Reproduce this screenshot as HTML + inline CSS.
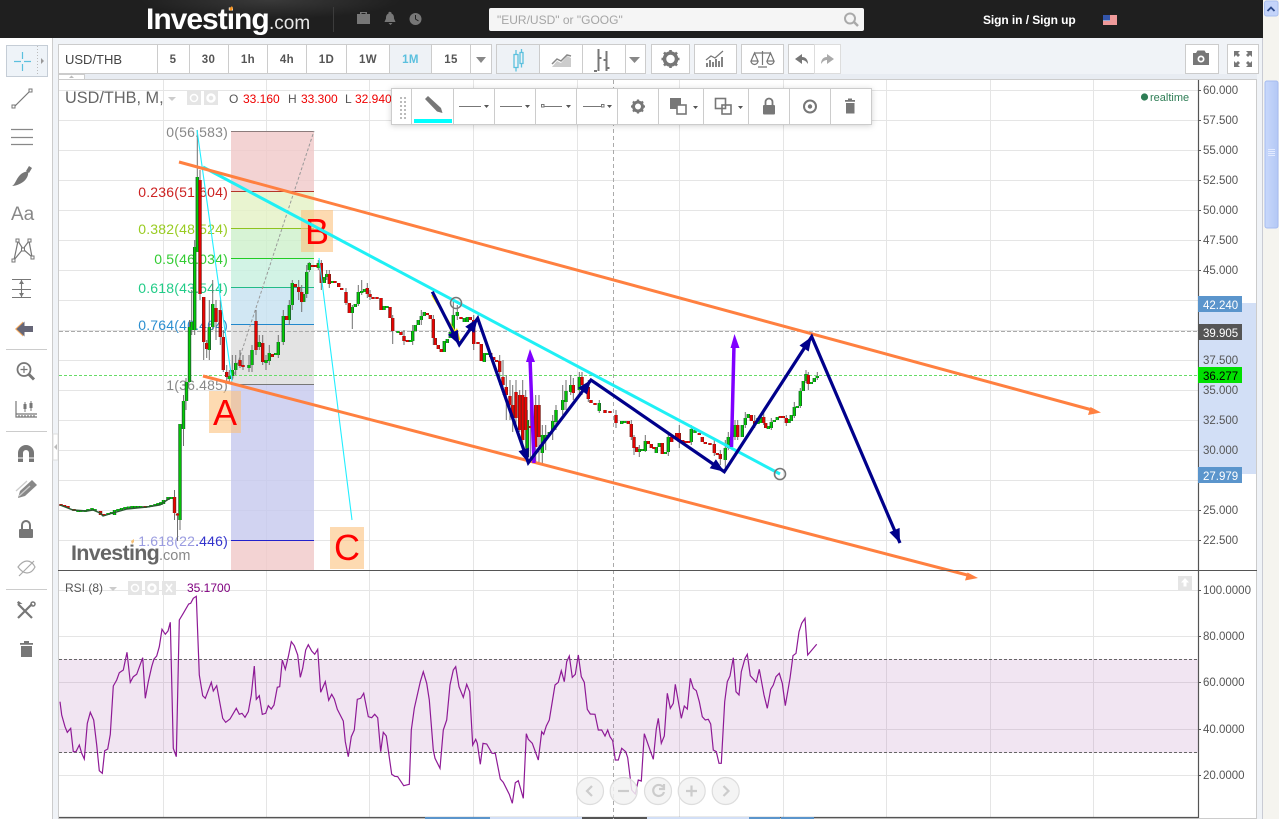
<!DOCTYPE html>
<html><head><meta charset="utf-8"><title>USD/THB</title>
<style>
html,body{margin:0;padding:0;background:#f0f3f7;overflow:hidden;width:1279px;height:819px}
svg{display:block;position:absolute;left:0;top:0}
text{font-family:"Liberation Sans",sans-serif}
.ax{font-size:11.5px;fill:#555}
.tb{font-size:11.5px;font-weight:bold;fill:#555;text-anchor:middle;letter-spacing:.4px}
.fib{font-size:14px;text-anchor:end;letter-spacing:.2px}
.ico{fill:#777}
.icl{fill:none;stroke:#777;stroke-width:1.2}
.btn{fill:#fff;stroke:#ccc}
</style></head><body>
<svg width="1279" height="819" viewBox="0 0 1279 819" xmlns="http://www.w3.org/2000/svg">
<defs>
<radialGradient id="hd" cx=".5" cy="0" r=".5"><stop offset="0" stop-color="#3a3a3a"/><stop offset="1" stop-color="#1f1f1f"/></radialGradient>
<linearGradient id="th" x1="0" x2="1" y1="0" y2="0"><stop offset="0" stop-color="#c8d8fb"/><stop offset="1" stop-color="#b4c8f5"/></linearGradient>
<path id="gb" d="M114.500 510V515M118 509V511M121.500 508V510M125 507V509M128.500 506.500V508.500M132 506V508M135 506V508M138 506V508M141 506V508M148 506V507.500M151 505V507M155 504V506M158 503V505M161 502V505M163.500 500V504M168 497V500M171.500 497V499M78 510V512M81 510V512M85 510V512M88 509V511M92 508V510M95 509V511M108 513V515M111.500 512V514M180 424V520M183.500 401V429M186.500 382V401M189.500 327V382M191.700 322V330M194.700 247V330M197.300 177V252M209.300 327V350M212.700 304V327M229.300 376V379M232.300 370V376M235.700 363V370M249 365V368M252 350V365M259.300 342V347M266 360V363M269.300 353V361M275.700 353V355M278.300 342V355M283.300 316V342M289.300 305V320M292.300 283V305M303.700 294V302M306.700 272V294M309.300 263V270M318.300 263V268M324.300 277V283M326.700 274V277M332.300 281V283M352.300 307V313M355.300 304V307M358.300 292V304M361.700 291V293M364.500 289V292M384 306V310M387 306V308M398 331V333M410.700 340V342M412.700 331V341M415.300 325V331M418.300 320V325M421.300 316V320M424.300 312V316M444.300 341V352M447.300 339V343M450.300 332V338M453.300 315V333M457.300 312V316M464.300 318V322M467.300 317V322M484.300 353V362M487.300 353V355M527.300 420V457M542.300 435V453M545.700 435V440M549.300 432V435M552.700 421V430M556 410V422M562.700 400V410M566 391V402M570.700 385V392M579.300 377V390M599.300 403V411M621.700 421V424M624.700 421V423M639.300 449V452M642.300 449V451M645.300 441V451M656.300 447V453M659.300 443V447M665.300 452V454M668.300 437V452M691.300 429V442M695 430V433M725.300 448V460M728.300 437V448M735 425V437M742.300 425V437M745.300 418V425M748.300 414V418M758 418V424M760.700 417V423M768.300 426V429M771.300 422V428M774.300 420V422M777.300 417V420M789 419V423M791.300 415V421M794.300 407V416M797.300 406V408M800.300 391V406M803.300 381V391M806 374V381M811.300 382V384M814.300 378V382M817.300 376V378"/>
<path id="rb" d="M61 504V506M64.500 505V507M68 506V508M74 509V511M100.500 511V515M104 514V516M145 506V508M174.500 497V513M177.500 513.500V515.500M200 180V294M203.700 297V342M206.700 343V349M216 308V322M220.300 310V337M223.300 337V370M226.700 372V377M240 360V366M243 365V367M256 321V350M262.700 343V362M272.300 354V357M286.700 316V320M295.300 284V287M298.700 287V292M301.700 292V302M312.300 265V267M315.700 265V267M321.300 263V283M329.300 274V284M335 281V283M338.700 283V287M341.700 288V290M346 292V303M349.300 303V313M367.300 288V294M370 294V297M373 297V299M377 297V299M381 298V310M390 307V318M392.700 318V331M401 332V335M404 336V341M407.300 340V342M427.300 313V315M430.300 315V319M433.300 319V338M435.300 338V345M438.300 345V349M441.300 349V352M461 317V319M470.300 317V320M473.700 320V344M478 342V344M481.300 344V361M490.700 353V357M493.700 357V360M496.700 360V362M499.700 361V372M503 377V385M506.300 387V395M510 396V405M512.700 405V418M516 392V418M519.700 395V430M522.700 395V440M525.700 397V430M530.300 426V428M535.700 405V447M539 405V437M573.300 385V393M582 377V385M588.300 387V399M591 400V403M595 403V405M605 410V413M610 411V413M616 415V423M628.300 421V424M631.300 424V437M634 437V448M636.700 447V452M648.300 441V444M651.300 444V448M654 447V449M662.300 443V454M671.700 437V442M676.700 433V438M679.300 433V442M682.700 440V443M685.700 441V443M688.700 441V443M699.300 433V435M702.300 437V442M705.300 442V444M710 443V445M714.300 444V453M717.300 453V455M720.300 454V459M737.700 425V437M751.300 415V421M754.700 421V425M763.700 417V423M765.700 423V428M780.300 416V418M783.300 416V418M786.300 418V423M808.300 375V384"/>
</defs>

<!-- page bg -->
<rect x="0" y="0" width="1279" height="819" fill="#f0f3f7"/>
<!-- header -->
<rect x="0" y="0" width="1263" height="38" fill="#1f1f1f"/>
<rect x="140" y="0" width="260" height="38" fill="url(#hd)"/>
<text x="146" y="29" font-size="30" font-weight="bold" fill="#fff" letter-spacing="-1">Investing</text>
<text x="269" y="29" font-size="19" fill="#e8e8e8">.com</text>
<path d="M229 9l3-3 1 3-2 2z" fill="#f7931e"/>
<rect x="333" y="7" width="1" height="25" fill="#3c3c3c"/>
<path d="M357 14h3v-2h7v2h3v10h-13zM361.500 14h4v-1h-4z" fill="#777" fill-rule="evenodd"/>
<path d="M390.500 12a1.300 1.300 0 0 1 1 1.500c2.500 1 2.500 3.500 2.500 5l1.500 3.500h-11l1.500-3.500c0-1.500 0-4 2.500-5a1.300 1.300 0 0 1 2-1.500zM388.500 23h4l-2 2z" fill="#777"/>
<circle cx="415.500" cy="19" r="6" fill="#777"/><path d="M415.500 15v4l3 2" stroke="#222" fill="none"/>
<rect x="489" y="8" width="375" height="23" rx="2" fill="#f5f5f5"/>
<text x="497" y="24" font-size="12" fill="#a5a5a5">"EUR/USD" or "GOOG"</text>
<circle cx="850" cy="18.500" r="5" fill="none" stroke="#aaa" stroke-width="2"/><path d="M854 22l4 4" stroke="#aaa" stroke-width="2.500"/>
<text x="983" y="24" font-size="12" font-weight="bold" fill="#fff" letter-spacing="-.08">Sign in / Sign up</text>
<rect x="1103" y="15" width="14" height="10" fill="#fff"/>
<path d="M1103 16h14M1103 18h14M1103 20h14M1103 22h14M1103 24h14" stroke="#d33" stroke-width="1"/>
<rect x="1103" y="15" width="7" height="5.500" fill="#35a"/>

<!-- scrollbar -->
<rect x="1263" y="0" width="16" height="819" fill="#f5f4ef"/>
<rect x="1264.500" y="1" width="13.500" height="15" rx="2" fill="#c4d4fa" stroke="#a9bff0"/>
<path d="M1267.500 11l3.500-3.500 3.500 3.500" fill="none" stroke="#2c4a8c" stroke-width="1.800"/>
<rect x="1265" y="81" width="13" height="147" rx="2" fill="url(#th)" stroke="#a6bcf0"/>
<path d="M1268 149.500h7M1268 151.500h7M1268 153.500h7M1268 155.500h7" stroke="#e2eaff"/>
<rect x="1262" y="38" width="1" height="781" fill="#c9cbd4"/>

<!-- sidebar -->
<rect x="0" y="38" width="52" height="781" fill="#fff"/>
<rect x="52" y="38" width="1" height="781" fill="#ccc"/>
<rect x="53" y="434" width="5" height="26" fill="#fff" stroke="#ddd"/>
<path d="M57 444l-3 3 3 3z" fill="#bbb"/>

<!-- top toolbar -->
<rect x="58.500" y="44.500" width="433" height="29" class="btn"/>
<rect x="389.500" y="44.500" width="42" height="29" fill="#eef2f6" stroke="#ccc"/>
<path d="M157.500 44v30M189.500 44v30M228.500 44v30M267.500 44v30M306.500 44v30M346.500 44v30M470.500 44v30" stroke="#ccc"/>
<text x="65" y="64" font-size="13" fill="#444">USD/THB</text>
<text x="173" y="63" class="tb">5</text><text x="208.500" y="63" class="tb">30</text><text x="248" y="63" class="tb">1h</text><text x="287" y="63" class="tb">4h</text><text x="326.500" y="63" class="tb">1D</text><text x="368" y="63" class="tb">1W</text>
<text x="410.500" y="63" class="tb" style="fill:#5bc0de">1M</text><text x="451" y="63" class="tb">15</text>
<path d="M476 57h10l-5 6z" fill="#888"/>

<rect x="496.500" y="44.500" width="149" height="29" class="btn"/>
<rect x="496.500" y="44.500" width="43" height="29" fill="#eef2f6" stroke="#ccc"/>
<path d="M539.500 44v30M582.500 44v30M625.500 44v30" stroke="#ccc"/>
<path d="M514 54.500h4v13h-4zM516 50v4M516 67.500v4M520 52.500h3v11h-3zM521.500 49v3.500M521.500 63.500v4" fill="none" stroke="#5bc0de" stroke-width="1.300"/>
<path d="M552 67l5-6 4 2 6-7 4 2v9h-19z" fill="#ccc"/><path d="M552 64l5-5 4 2 6-6 4 1" fill="none" stroke="#888" stroke-width="1.500"/>
<path d="M598.500 49v22M597 71h-3M598.500 58h3M606.500 51v20M606.500 60h-3M606.500 68h3" fill="none" stroke="#777" stroke-width="2"/>
<path d="M629 57h11l-5.500 6z" fill="#888"/>

<rect x="651.500" y="44.500" width="38" height="29" class="btn"/>
<circle cx="670.500" cy="59" r="6" fill="none" stroke="#777" stroke-width="3.500"/>
<path d="M670.500 50v3M670.500 65v3M661.500 59h3M676.500 59h3M664 52.500l2 2M675 63.500l2 2M664 65.500l2-2M675 54.500l2-2" stroke="#777" stroke-width="2.600"/>
<rect x="694.500" y="44.500" width="42" height="29" class="btn"/>
<path d="M707 67v-4M710 67v-7M713 67v-5M716 67v-8M719 67v-6M722 67v-10" stroke="#777" stroke-width="1.800"/><path d="M706 60l5-4 4 2 8-7" fill="none" stroke="#777" stroke-width="1.200"/>
<rect x="741.500" y="44.500" width="42" height="29" class="btn"/>
<path d="M762.500 51v14M754 53h17M758 67h9M754.500 53l-3.500 8h7zM770.500 53l-3.500 8h7zM751 61a3.500 3.500 0 0 0 7 0M767 61a3.500 3.500 0 0 0 7 0" fill="none" stroke="#777" stroke-width="1.200"/>
<rect x="788.500" y="44.500" width="26" height="29" class="btn"/>
<rect x="814.500" y="44.500" width="26" height="29" fill="#fff" stroke="#ddd"/>
<path d="M795 59l7-5v3c4 0 6 3 6 7-2-3-4-4-6-4v4z" fill="#777"/>
<path d="M834 59l-7-5v3c-4 0-6 3-6 7 2-3 4-4 6-4v4z" fill="#aaa"/>
<rect x="1185.500" y="44.500" width="33" height="29" class="btn"/>
<path d="M1193 53h3l1.500-2.500h7l1.500 2.500h3v12h-16z" fill="#777"/><circle cx="1201" cy="59" r="3.500" fill="#fff"/><circle cx="1201" cy="59" r="1.800" fill="#777"/>
<rect x="1227.500" y="44.500" width="31" height="29" class="btn"/>
<path d="M1234 51h6l-2 2 2 2-2 2-2-2-2 2zM1252 51h-6l2 2-2 2 2 2 2-2 2 2zM1234 67h6l-2-2 2-2-2-2-2 2-2-2zM1252 67h-6l2-2-2-2 2-2 2 2 2-2z" fill="#777"/>

<!-- chart frame -->
<rect x="58" y="74" width="1199" height="5" fill="#e8ecf2"/>
<rect x="58.500" y="74.500" width="26" height="5" fill="#fff" stroke="#ccc"/>
<path d="M69 78l2.500-2.500 2.500 2.500z" fill="#bbb"/>
<rect x="58.500" y="79.500" width="1198" height="739" fill="#fff" stroke="#ccc"/>

<!-- grid -->
<path d="M59 90.500H1198M59 120.500H1198M59 150.500H1198M59 180.500H1198M59 210.500H1198M59 240.500H1198M59 270.500H1198M59 300.500H1198M59 330.500H1198M59 360.500H1198M59 390.500H1198M59 420.500H1198M59 450.500H1198M59 480.500H1198M59 510.500H1198M59 540.500H1198M59 590.500H1198M59 636.500H1198M59 682.500H1198M59 729.500H1198M59 775.500H1198M163.500 80V817M266.500 80V817M369.500 80V817M473.500 80V817M577.500 80V817M679.500 80V817M783.500 80V817M886.500 80V817M990.500 80V817M1093.500 80V817" stroke="#e5e5e5" fill="none"/>

<!-- fib -->
<g fill-opacity=".8">
<rect x="231" y="131" width="83" height="60" fill="#f0c8c8"/>
<rect x="231" y="191" width="83" height="37" fill="#e4f1c4"/>
<rect x="231" y="228" width="83" height="30" fill="#cdf0ca"/>
<rect x="231" y="258" width="83" height="29" fill="#c7f0de"/>
<rect x="231" y="287" width="83" height="37" fill="#c6e1f0"/>
<rect x="231" y="324" width="83" height="60" fill="#dcdcdc"/>
<rect x="231" y="384" width="83" height="156" fill="#c5c8ee"/>
<rect x="231" y="540" width="83" height="30" fill="#f0c8c8"/>
</g>
<path d="M231 131.500h83" stroke="#8c7c7c"/><path d="M231 191.500h83" stroke="#b5352a"/><path d="M231 228.500h83" stroke="#8fc31f"/><path d="M231 258.500h83" stroke="#22cc22"/><path d="M231 287.500h83" stroke="#22bb88"/><path d="M231 324.500h83" stroke="#2288cc"/><path d="M231 384.500h83" stroke="#777"/><path d="M231 540.500h83" stroke="#2222cc"/>
<path d="M231 384L314 131" stroke="#999" stroke-dasharray="3 2" fill="none"/>
<text x="228" y="137" class="fib" fill="#888">0(56.583)</text>
<text x="228" y="197" class="fib" fill="#cc2222">0.236(51.604)</text>
<text x="228" y="234" class="fib" fill="#99cc22">0.382(48.524)</text>
<text x="228" y="264" class="fib" fill="#33cc33">0.5(46.034)</text>
<text x="228" y="293" class="fib" fill="#22cc88">0.618(43.544)</text>
<text x="228" y="330" class="fib" fill="#2b8fd0">0.764(40.464)</text>
<text x="228" y="390" class="fib" fill="#888">1(36.485)</text>
<text x="228" y="546" class="fib"><tspan fill="#9a9ce0">1.618(22</tspan><tspan fill="#3333cc">.446)</tspan></text>

<!-- crosshair & price lines -->
<path d="M613.500 80V817" stroke="#aaa" stroke-dasharray="4 3"/>
<path d="M59 331.500H1198" stroke="#aaa" stroke-dasharray="4 2"/>
<path d="M59 375.500H1198" stroke="#66dd66" stroke-dasharray="3 2"/>

<!-- watermark -->
<text x="71" y="560" font-size="21.500" font-weight="bold" fill="#666" letter-spacing="-.7">Investing</text>
<text x="159" y="560" font-size="14.500" fill="#888">.com</text>
<path d="M131 541l3-2 0 3-2 2z" fill="#f5c27a"/>

<!-- wicks -->
<path d="M174.500 490V520M177.500 513V541M180 520V530M183.500 395V446M186 378V410M189.500 320V382M191.700 290V335M194.700 240V335M197.300 130V200M200 170V300M203.700 297V360M206.700 340V358M209.300 300V360M212.700 280V330M216 300V340M220.300 300V345M223.300 330V372M226.700 365V382M229.300 370V382M232.300 355V380M235.700 355V375M240 350V368M243 355V370M249 355V372M252 345V372M256 310V355M259.300 335V350M262.700 335V365M266 355V370M269.300 345V365M278.300 335V358M283.300 310V345M289.300 300V325M292.300 280V310M298.700 280V300M301.700 285V312M306.700 265V298M309.300 262V272M318.300 260V270M321.300 260V290M326.700 270V280M329.300 270V288M346 288V305M352.300 305V329M358.300 285V306M361.700 280V295M367.300 283V298M370 290V300M392.700 315V344M404 330V345M412.700 325V345M421.300 310V325M433.300 315V345M453.300 300V335M457.300 305V320M473.700 315V350M499.700 355V385M503 360V395M506.300 375V420M510 380V420M512.700 385V432M516 380V425M519.700 390V432M522.700 380V450M525.700 390V455M527.300 410V460M530.300 400V460M535.700 395V462M539 395V462M542.300 425V465M545.700 425V450M552.700 415V440M556 405V430M562.700 385V415M566 380V410M570.700 375V395M573.300 378V400M579.300 372V395M582 372V395M588.300 380V402M599.300 400V413M616 410V428M631.300 420V440M634 435V455M639.300 445V457M645.300 435V452M668.300 432V456M679.300 425V448M691.300 425V445M714.300 440V456M720.300 450V465M725.300 440V470M728.300 432V450M735 420V440M737.700 420V440M745.300 412V428M754.700 415V428M763.700 412V425M771.300 418V430M786.300 415V426M794.300 402V418M800.300 388V408M806 370V383M808.300 372V390M817.300 372V380" stroke="#707070" fill="none"/>
<!-- candle bodies -->
<use href="#gb" stroke="#1c5e2c" stroke-width="3.400" fill="none"/>
<use href="#gb" stroke="#00d000" stroke-width="1.700" fill="none"/>
<use href="#rb" stroke="#7a2018" stroke-width="3.400" fill="none"/>
<use href="#rb" stroke="#ee0000" stroke-width="1.800" fill="none"/>
<path d="M60 505L73 510L87 511L93 510L100 513L103 516L113 513L127 509L147 507L160 505L170 498" fill="none" stroke="#2a5a30" stroke-width="1.400"/>

<!-- label boxes -->
<rect x="209" y="391" width="32" height="42" fill="#fbc27d" fill-opacity=".6"/>
<rect x="301" y="210" width="32" height="42" fill="#fbc27d" fill-opacity=".6"/>
<rect x="330" y="527" width="34" height="42" fill="#fbc27d" fill-opacity=".6"/>
<text x="225" y="425" font-size="36" fill="#ff0000" text-anchor="middle">A</text>
<text x="317" y="244" font-size="36" fill="#ff0000" text-anchor="middle">B</text>
<text x="347" y="560" font-size="36" fill="#ff0000" text-anchor="middle">C</text>

<!-- thin cyan -->
<path d="M197 130L232 381M319 258L352 520" stroke="#22eeff" stroke-width="1.100" fill="none"/>
<!-- cyan thick -->
<path d="M203 167L780 474" stroke="#1ff0f5" stroke-width="3" fill="none"/>
<circle cx="456" cy="303" r="5.500" fill="none" stroke="#777" stroke-width="1.500"/>
<circle cx="780" cy="474" r="5.500" fill="none" stroke="#777" stroke-width="1.600"/>
<!-- orange -->
<path d="M179 162L1094 410.500" stroke="#ff8040" stroke-width="3" fill="none"/>
<path d="M1101 412.500l-13 2.500 2.500-8z" fill="#ff8040"/>
<path d="M203 376L971 576" stroke="#ff8040" stroke-width="3" fill="none"/>
<path d="M978 578l-13 2.500 2.500-8z" fill="#ff8040"/>
<!-- yellow -->
<path d="M432 295L460 340" stroke="#ffee00" stroke-width="2" fill="none"/>
<path d="M457 328l3.500 12-8-6z" fill="#ffee00"/>
<!-- purple -->
<path d="M534 463L530 358" stroke="#8000ff" stroke-width="3.500" fill="none"/>
<path d="M530 349l5 13h-9z" fill="#8000ff"/>
<path d="M731.500 447L734 345" stroke="#8000ff" stroke-width="3.500" fill="none"/>
<path d="M734.500 334l5 14h-9z" fill="#8000ff"/>
<!-- navy -->
<path d="M432.300 291.700L459.300 344.700L477.700 318.300L528.300 462.700L591 380L724.300 471.700L811.700 336.700L900 543" stroke="#00008b" stroke-width="3.200" fill="none" stroke-linejoin="miter"/>
<path d="M459.300 344.700L457.800 329.700L448 334.700zM477.700 318.300L474.200 332.900L465.200 326.700zM528.300 462.700L528.900 447.700L518.500 451.300zM591 380L586.900 394.500L578.100 387.900zM724.300 471.700L715.900 459.300L709.700 468.300zM811.700 336.700L808.700 351.500L799.500 345.500zM900 543L899.600 527.900L889.400 532.300z" fill="#00008b"/>

<!-- RSI band -->
<rect x="59" y="659" width="1139" height="94" fill="#a050a8" fill-opacity=".15"/>
<path d="M59 659.500H1198M59 752.500H1198" stroke="#666" stroke-dasharray="3 2"/>
<path fill="none" stroke="#8e1a96" stroke-width="1.200" d="M60 701.700L61.700 715L65 726.700L67.300 732.300L70.700 728.300L73.300 751.700L76 751.700L79.300 745L81.700 753.300L84.300 759L87.300 723.300L90.300 712.300L93.700 720L96.700 745L99.300 770.700L102.300 773.300L104.700 750.700L107.700 749L110.300 734.300L113.300 686L116.700 680L119.300 672.700L123.300 670L127 652.300L130.300 682.300L133.300 676.700L136.700 674.300L142.700 657.700L145.300 698.300L148.300 681.700L151.700 666.700L154 659L156.700 656L159.300 646.700L162 629.300L165.300 634.300L168 631L170.300 622.300L173.300 748.300L176.300 756.700L179.300 620L183.300 613.300L188.700 604L190.700 603.300L193.300 598.300L196.300 596.300L199.300 675L202.700 695.700L205.300 698.300L211.300 682.300L213.300 691L216.700 685.700L222.700 718.300L225.700 722.300L230 719L236.300 708.300L239.300 714.300L242 713.300L245 717.300L248.300 711.700L251.300 695L254.300 666L256.300 699.300L259.300 695.700L262.300 714.300L265.700 713.300L268.300 705.700L271.300 709L274 705L277.300 687.300L279.700 686.700L282.300 660L285.300 669.300L288.300 656.700L291.300 641.700L294.300 645.700L297.700 655L300.300 677.300L302.700 668.300L305.700 650L308.300 644.700L311.700 651L314.700 654.300L317.700 649.300L320.700 692.300L325.300 681.700L328.700 700.300L331.700 694.300L334.300 699L337.300 709.300L343.300 721L345.300 741.700L348.300 756.700L351.300 736.700L354.300 730L357.300 699.300L360.700 698.300L363.700 693.300L368.300 716.700L371.700 717.700L374.700 714.300L377.700 717.700L380.700 751.700L383.300 732.300L386.300 736L391.700 774.300L394.700 776.300L397.700 776.700L403.700 785.700L409.300 784.300L411.300 730L414.300 708.300L420.300 681.700L423.300 671.700L426.700 683.300L429.300 700L433.300 750L435 758.300L440 768.300L443.300 730L446.700 720L450 685L453.300 670L455.700 666.700L459 686.700L463.300 697.300L466.700 684.300L469.700 691.700L472.700 745L475.700 739.300L477.300 743.300L480.300 764.300L483 743.300L486.700 744L492 753.300L495.300 753.300L500.300 779L503.300 782.300L509.300 794.300L512.300 803.300L515.300 782.700L518.300 780.700L523.300 798.300L526.300 733.700L528.300 739.300L532.300 743.300L538.300 760L541.700 731.700L543.700 734.300L546.300 726L549.300 720L555 685L558.300 682.300L561.300 670.700L564.300 681.700L566.700 661.700L569.300 656L572.300 677.300L575.300 674.300L578.300 655L581.300 676.700L584.300 682.300L587.300 709.300L590.300 714L595 714.300L598.300 730L601.700 730L605 736L607.700 730L610 736.700L612.700 740.700L615.300 760L618.300 760L621.700 748.300L625.700 751.700L627.700 757.700L631.700 790L635.300 794L638.300 780L641.300 781L644.300 733.700L653.300 759.300L656.300 729L658.300 718.300L661.300 743.300L664.300 736L667.300 693.300L670.300 708.300L673.300 703.300L675.300 684.300L681.300 718.300L684.300 706L687.300 709L690.300 678.300L693.300 688.300L696.300 690.700L699.300 701.700L702.300 716.700L705.300 720L708.300 719.300L710.700 724L713.300 750L716.300 751.700L719 763.300L721.300 763.300L724.700 701.700L727.300 681.700L730 676L733.300 657.700L736 691.700L739 695L741.300 671.700L745 658.300L747.300 654.300L750.300 675.700L753.300 679L756.300 682.300L759.300 669.300L764 695L767.300 708.300L770.700 689.300L773.300 685L776 676.700L779.300 673.300L782.300 683.300L785.300 705.700L790 678.300L793 655.700L796 653.300L799 631.700L801.700 623.300L805 618.300L807.700 655L816.700 644.300"/>

<!-- nav buttons -->
<g fill="#f2f2f2" fill-opacity=".85" stroke="#ddd" stroke-width="1.200">
<circle cx="590" cy="791" r="13.500"/><circle cx="623.700" cy="791" r="13.500"/><circle cx="658" cy="791" r="13.500"/><circle cx="691.700" cy="791" r="13.500"/><circle cx="725.700" cy="791" r="13.500"/>
</g>
<g fill="none" stroke="#ccc" stroke-width="2.200">
<path d="M592 786l-5 5 5 5"/><path d="M618 791h11"/><path d="M663 787a5.500 5.500 0 1 0 1 5M664 784v5h-5"/><path d="M686 791h11M691.500 785.500v11"/><path d="M723.500 786l5 5-5 5"/>
</g>

<!-- axis -->
<path d="M58 570.500H1257" stroke="#555" stroke-width="1.100"/>
<path d="M59 817.500H1198" stroke="#555" stroke-width="1.200"/>
<path d="M1198.500 80V818" stroke="#555" stroke-width="1.200"/>
<path d="M1198 90.500h3M1198 120.500h3M1198 150.500h3M1198 180.500h3M1198 210.500h3M1198 240.500h3M1198 270.500h3M1198 360.500h3M1198 390.500h3M1198 420.500h3M1198 450.500h3M1198 510.500h3M1198 540.500h3M1198 590.500h3M1198 636.500h3M1198 682.500h3M1198 729.500h3M1198 775.500h3" stroke="#555"/>
<rect x="1199" y="303" width="57" height="171" fill="#d2dff6"/>
<g class="ax">
<text class="ax" x="1203" y="94">60.000</text><text class="ax" x="1203" y="124">57.500</text><text class="ax" x="1203" y="154">55.000</text><text class="ax" x="1203" y="184">52.500</text><text class="ax" x="1203" y="214">50.000</text><text class="ax" x="1203" y="244">47.500</text><text class="ax" x="1203" y="274">45.000</text><text class="ax" x="1203" y="364">37.500</text><text class="ax" x="1203" y="394">35.000</text><text class="ax" x="1203" y="424">32.500</text><text class="ax" x="1203" y="454">30.000</text><text class="ax" x="1203" y="514">25.000</text><text class="ax" x="1203" y="544">22.500</text>
<text class="ax" x="1203" y="594">100.0000</text><text class="ax" x="1203" y="640">80.0000</text><text class="ax" x="1203" y="686">60.0000</text><text class="ax" x="1203" y="733">40.0000</text><text class="ax" x="1203" y="779">20.0000</text>
</g>
<rect x="1198" y="296" width="44" height="16" fill="#5b95cc"/><text x="1203" y="309" font-size="11.500" fill="#fff">42.240</text>
<rect x="1198" y="324" width="44" height="16" fill="#555"/><text x="1203" y="337" font-size="11.500" fill="#fff">39.905</text>
<rect x="1198" y="367" width="44" height="16" fill="#00e000"/><text x="1203" y="380" font-size="11.500" fill="#000">36.277</text>
<rect x="1198" y="467" width="44" height="16" fill="#5b95cc"/><text x="1203" y="480" font-size="11.500" fill="#fff">27.979</text>

<!-- bottom strips -->
<rect x="425" y="817" width="65" height="2" fill="#5b95cc"/><rect x="490" y="817" width="92" height="2" fill="#d2dff6"/><rect x="582" y="817" width="31" height="2" fill="#555"/><rect x="614" y="817" width="33" height="2" fill="#555"/><rect x="647" y="817" width="102" height="2" fill="#d2dff6"/><rect x="749" y="817" width="31" height="2" fill="#5b95cc"/><rect x="781" y="817" width="33" height="2" fill="#5b95cc"/>

<!-- header pane labels -->
<text x="65" y="103" font-size="16.300" fill="#666">USD/THB, M,</text>
<path d="M168 97h8l-4 4z" fill="#ccc"/>
<rect x="187" y="91" width="14" height="14" fill="#e5e5e5"/><rect x="204" y="91" width="14" height="14" fill="#e5e5e5"/>
<circle cx="194" cy="98" r="3.500" fill="none" stroke="#fff" stroke-width="1.500"/><circle cx="211" cy="98" r="3.500" fill="none" stroke="#fff" stroke-width="2.500"/>
<text x="229" y="103" font-size="12" fill="#555">O</text><text x="243" y="103" font-size="12" fill="#e00">33.160</text>
<text x="288" y="103" font-size="12" fill="#555">H</text><text x="301" y="103" font-size="12" fill="#e00">33.300</text>
<text x="345" y="103" font-size="12" fill="#555">L</text><text x="355" y="103" font-size="12" fill="#e00">32.940</text>
<circle cx="1144.500" cy="97" r="3.600" fill="#2e7d55"/>
<text x="1150" y="101" font-size="11" fill="#2e7d55">realtime</text>

<text x="65" y="592" font-size="12" fill="#555">RSI (8)</text>
<path d="M109 587h8l-4 4z" fill="#ccc"/>
<rect x="128" y="581" width="14" height="14" fill="#e5e5e5"/><rect x="145" y="581" width="14" height="14" fill="#e5e5e5"/><rect x="162" y="581" width="14" height="14" fill="#e5e5e5"/>
<circle cx="135" cy="588" r="3.500" fill="none" stroke="#fff" stroke-width="1.500"/><circle cx="152" cy="588" r="3.500" fill="none" stroke="#fff" stroke-width="2.500"/><path d="M166 584l6 8M172 584l-6 8" stroke="#fff" stroke-width="1.600"/>
<text x="187" y="592" font-size="12" fill="#800080">35.1700</text>
<rect x="1178" y="576" width="14" height="14" fill="#e5e5e5"/><path d="M1185 578l4 4.500h-2.500v4h-3v-4h-2.500z" fill="#fff"/>

<!-- floating toolbar -->
<rect x="391.500" y="88.500" width="480" height="36" fill="#fff" stroke="#ccc" style="filter:drop-shadow(0 1px 3px rgba(0,0,0,.18))"/>
<path d="M411.500 89v35M453.500 89v35M494.500 89v35M535.500 89v35M576.500 89v35M617.500 89v35M658.500 89v35M703.500 89v35M748.500 89v35M789.500 89v35M830.500 89v35" stroke="#ccc"/>
<path d="M400 97h2v2h-2zM404 97h2v2h-2zM400 101h2v2h-2zM404 101h2v2h-2zM400 105h2v2h-2zM404 105h2v2h-2zM400 109h2v2h-2zM404 109h2v2h-2zM400 113h2v2h-2zM404 113h2v2h-2zM400 117h2v2h-2zM404 117h2v2h-2z" fill="#bbb"/>
<path d="M425 99l3-3 13 12 1.500 5-5.500-1.500z" fill="#777"/>
<rect x="414" y="119" width="38" height="4" fill="#00ffff"/>
<path d="M459 106.500h22M500 106.500h22M544 106.500h18M583 106.500h19" stroke="#777"/>
<path d="M484 105h5l-2.500 3zM525 105h5l-2.500 3zM566 105h5l-2.500 3zM607 105h5l-2.500 3zM693 106h5l-2.500 3zM738 106h5l-2.500 3z" fill="#555"/>
<rect x="541.500" y="104.500" width="2.500" height="2.500" fill="#fff" stroke="#777"/>
<rect x="601.500" y="104.500" width="2.500" height="2.500" fill="#fff" stroke="#777"/>
<circle cx="638" cy="106.500" r="4.500" fill="none" stroke="#777" stroke-width="3"/>
<path d="M638 99.500v2.500M638 111v2.500M631 106.500h2.500M642.500 106.500h2.500M633 101.500l1.800 1.800M641.200 109.700l1.800 1.800M633 111.500l1.800-1.800M641.200 103.300l1.800-1.800" stroke="#777" stroke-width="2.200"/>
<rect x="670" y="98" width="11" height="11" fill="#777"/><rect x="677" y="105" width="9" height="9" fill="#fff" stroke="#777" stroke-width="1.600"/>
<rect x="715.500" y="98.500" width="10" height="10" fill="none" stroke="#777" stroke-width="1.600"/><rect x="722" y="105" width="9" height="9" fill="none" stroke="#777" stroke-width="1.600"/>
<rect x="763" y="105" width="12" height="9.500" rx="1" fill="#777"/><path d="M765.500 105v-3a3.500 3.500 0 0 1 7 0v3" fill="none" stroke="#777" stroke-width="1.800"/>
<circle cx="810" cy="106.500" r="6" fill="none" stroke="#777" stroke-width="2"/><circle cx="810" cy="106.500" r="2.200" fill="#777"/>
<path d="M845 100h10v1.800h-10zM848 98.500h4v1.500h-4zM846 103h8.500v10.500h-8.500z" fill="#777"/>

<!-- sidebar icons -->
<rect x="6.500" y="45.500" width="41" height="31" fill="#eef3f8" stroke="#c5cdd6"/>
<path d="M37.500 46v30" stroke="#bbb" stroke-dasharray="1 2"/><path d="M41 58l3 3-3 3z" fill="#999"/>
<path d="M22.500 52v7M22.500 64v7M14 61.500h7M24 61.500h7" stroke="#5bc0de" stroke-width="1.200"/>
<path d="M14.500 106.500L29.500 91.500" class="icl"/><rect x="12" y="105" width="3" height="3" fill="#fff" stroke="#777"/><rect x="29" y="89" width="3" height="3" fill="#fff" stroke="#777"/>
<path d="M11 129.500h22M11 137.500h22M11 144.500h22" stroke="#888" stroke-width="1.200"/>
<path d="M12 186c3-1 4-7 8-11 3-3 7-4 8-3 1 3-2 8-5 10-3 2-7 4-11 4zM26 171l3-5 3 2-3 5z" fill="#777"/>
<text x="11" y="220" font-size="19" fill="#888">Aa</text>
<path d="M14 260L18 241L23 249L29 241L32 257L23 249L14 260" class="icl"/>
<g fill="#fff" stroke="#777"><rect x="12" y="259" width="3" height="3"/><rect x="16" y="239" width="3" height="3"/><rect x="28" y="239" width="3" height="3"/><rect x="31" y="256" width="3" height="3"/><rect x="21.500" y="248" width="3" height="3"/></g>
<path d="M12 279.500h19M12 289.500h19M12 297.500h19M21.500 280v17" stroke="#777" stroke-width="1.100"/><path d="M21.500 280l-2.500 4h5zM21.500 297l-2.500-4h5z" fill="#777"/>
<path d="M15 329l8-7.500v4.500h3v6h-3v4.500z" fill="#f2a65a"/><path d="M16.500 329l8-7.500v4.500h8.500v6h-8.500v4.500z" fill="#667"/>
<path d="M6 349.500h41M6 431.500h41M6 589.500h41" stroke="#ccc"/>
<circle cx="24" cy="369.500" r="6.500" fill="none" stroke="#777" stroke-width="1.800"/><path d="M29 374.500l5 5" stroke="#777" stroke-width="3"/><path d="M20.500 369.500h7M24 366v7" stroke="#777" stroke-width="1.200"/>
<path d="M16 401v16h21M16 414h21M19 417v-2M22 417v-2M25 417v-2M28 417v-2M31 417v-2M34 417v-2" fill="none" stroke="#777" stroke-width="1.200"/><path d="M25 402v10M31 401v10" stroke="#777"/><rect x="23.500" y="404" width="3" height="5" fill="#777"/><rect x="29.500" y="403" width="3" height="5" fill="#777"/>
<path d="M18 462v-9a8 8 0 0 1 16 0v9h-5v-9a3 3 0 0 0-6 0v9z" fill="#777"/><path d="M18 458h5M29 458h5" stroke="#fff"/>
<path d="M18 498l2-7 12-11 5 5-12 11z" fill="#888"/><path d="M16 491l11-10M19 496l11-10" stroke="#ccc" stroke-width="1.300"/>
<rect x="19" y="529" width="14" height="9" rx="1" fill="#777"/><path d="M22 529v-4a4 4 0 0 1 8 0v4" fill="none" stroke="#777" stroke-width="2"/>
<path d="M18 567c3-4 6-6 9-6s6 2 8 6c-2 4-5 6-8 6s-6-2-9-6zM19 576l15-15" fill="none" stroke="#aaa" stroke-width="1.200"/>
<path d="M18 604l14 14M32 604l-14 14" stroke="#777" stroke-width="2.200"/><path d="M18 604l-1-1.500 1.500-1.500 4 3z" fill="#777"/><circle cx="33" cy="604" r="2" fill="none" stroke="#777" stroke-width="1.500"/>
<path d="M20 643h13v1.800H20zM24 641h5v2h-5zM21 646h11v11H21z" fill="#777"/>
</svg>
</body></html>
